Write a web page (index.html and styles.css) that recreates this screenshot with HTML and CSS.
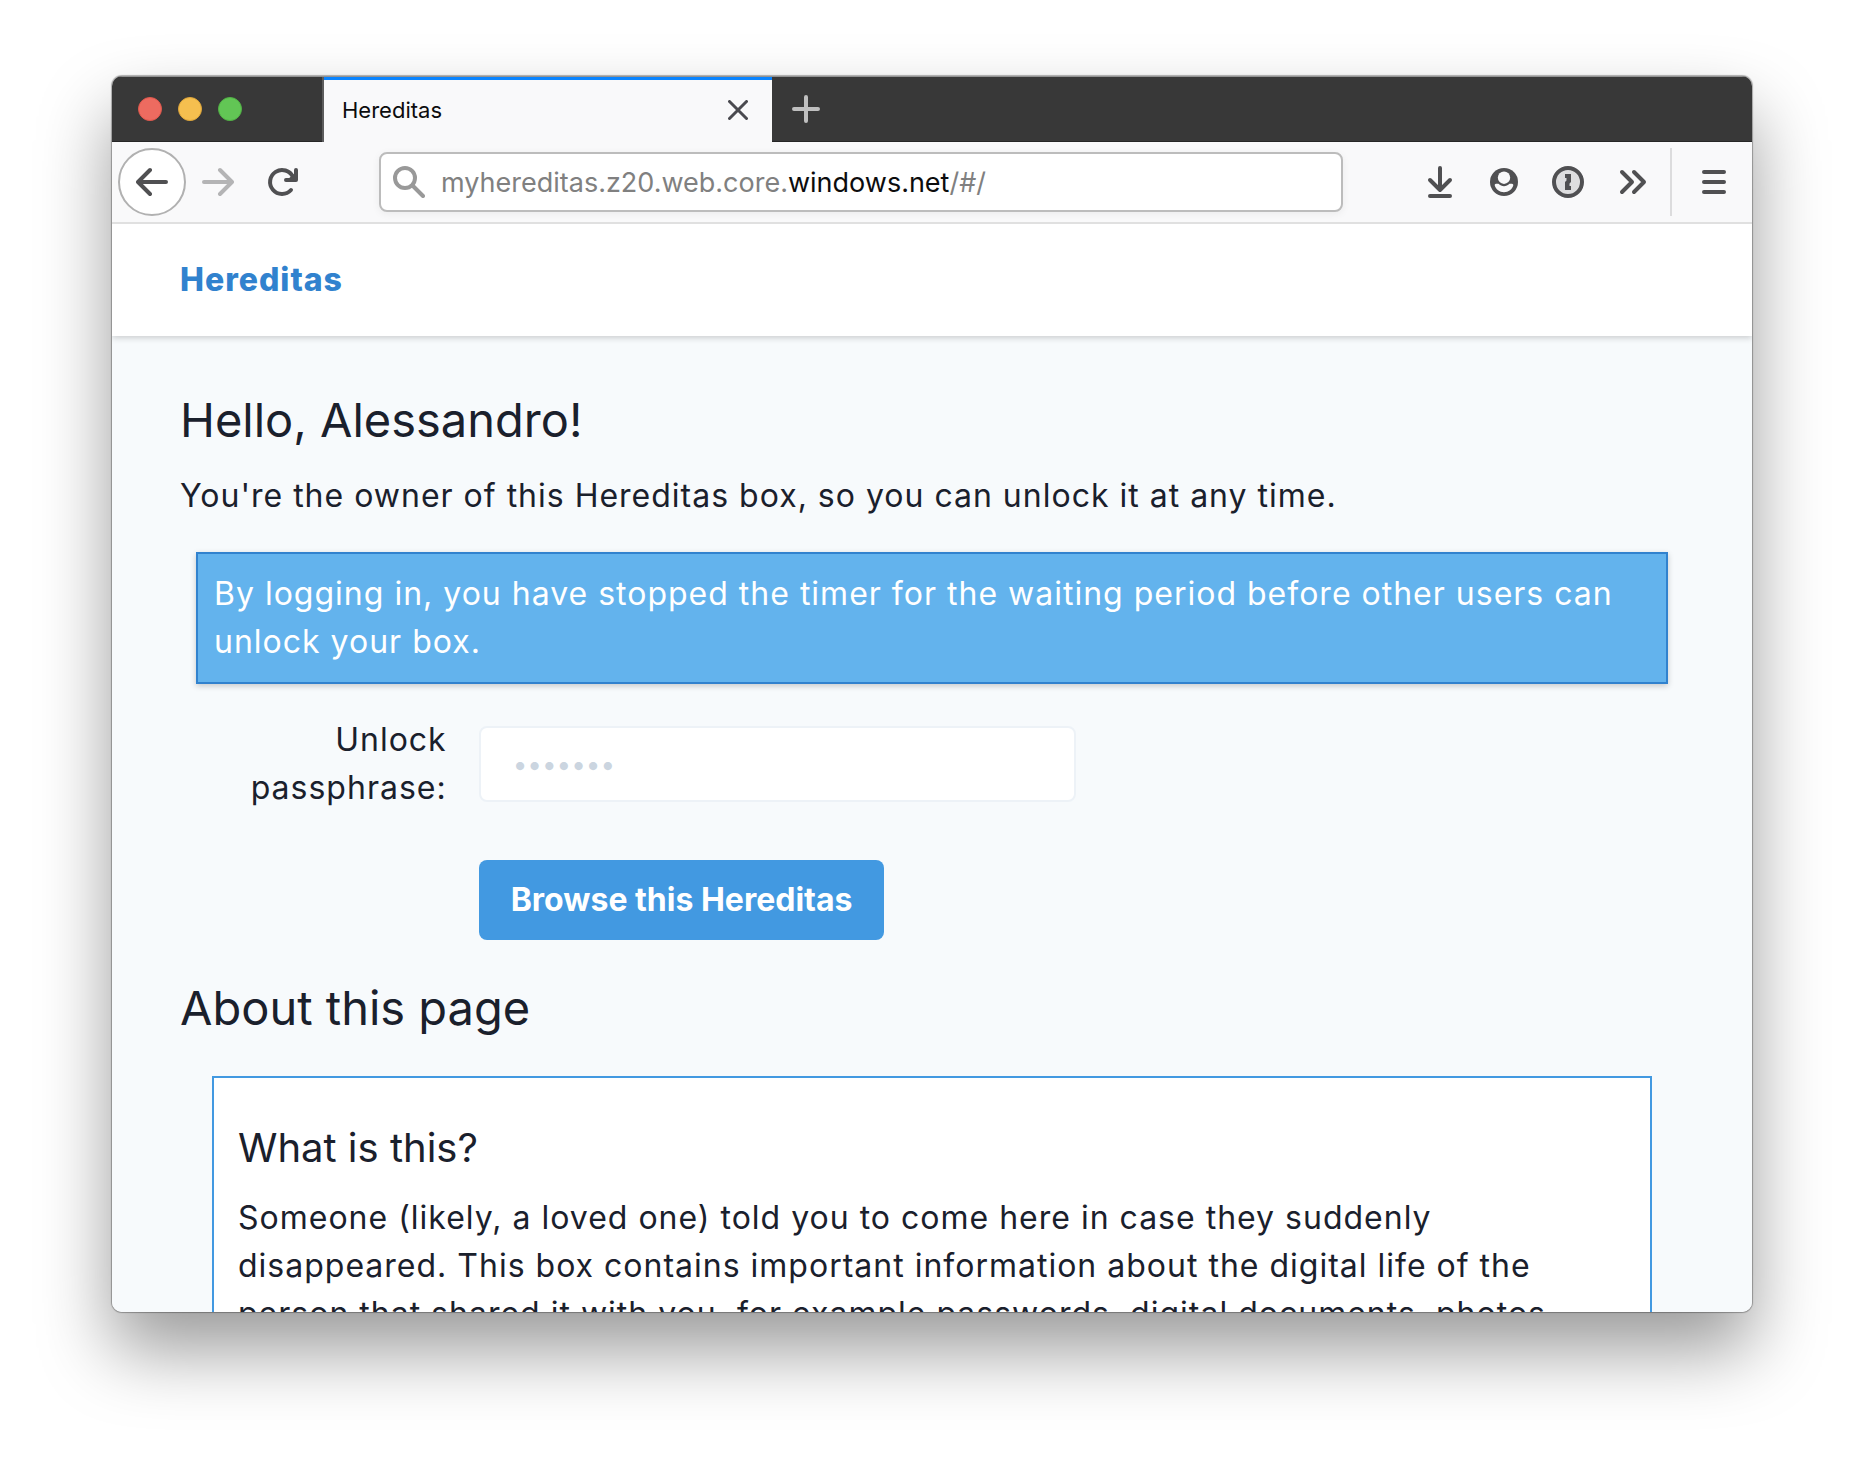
FILE: index.html
```html
<!DOCTYPE html>
<html lang="en">
<head>
<meta charset="utf-8">
<meta name="viewport" content="width=device-width, initial-scale=1">
<title>Hereditas</title>
<link rel="stylesheet" href="styles.css">
</head>
<body>
<div class="window">
  <div class="titlebar">
    <div class="lights">
      <button class="light light-close" aria-label="Close window"></button>
      <button class="light light-minimize" aria-label="Minimize window"></button>
      <button class="light light-zoom" aria-label="Zoom window"></button>
    </div>
    <div class="tab">
      <span class="tab-title">Hereditas</span>
      <button class="tab-close" aria-label="Close tab">
        <svg width="20" height="20" viewBox="0 0 20 20"><path d="M1.500 1.500l17 17M18.500 1.500l-17 17"/></svg>
      </button>
    </div>
    <button class="tab-new" aria-label="New tab">
      <svg width="28" height="28" viewBox="0 0 28 28"><path d="M14 2v24M2 14h24"/></svg>
    </button>
  </div>

  <div class="toolbar">
    <button class="tool tool-back" aria-label="Back">
      <svg width="32" height="32" viewBox="0 0 32 32"><path d="M30 16H3M14 4L2 16l12 12"/></svg>
    </button>
    <button class="tool tool-forward" aria-label="Forward" disabled>
      <svg width="32" height="32" viewBox="0 0 32 32"><path d="M2 16h27M18 4l12 12-12 12"/></svg>
    </button>
    <button class="tool" aria-label="Reload">
      <svg width="32" height="32" viewBox="0 0 32 32"><path d="M25 24A12 12 0 1 1 27 11"/><path d="M30 4v10H20"/><path class="solid" d="M30 6v8h-9z"/></svg>
    </button>
    <div class="address">
      <svg width="32" height="32" viewBox="0 0 32 32"><circle cx="12" cy="12" r="10"/><path d="M19.500 19.500L30 30"/></svg>
      <div class="address-text" role="textbox" aria-label="Address" contenteditable="true" spellcheck="false">myhereditas.z20.web.core.<span class="address-domain">windows.net</span>/#/</div>
    </div>
    <button class="tool" aria-label="Downloads">
      <svg width="32" height="32" viewBox="0 0 32 32"><path d="M16 2v22M6 14l10 10 10-10M6 30h20"/></svg>
    </button>
    <button class="tool" aria-label="Account">
      <svg width="32" height="32" viewBox="0 0 32 32"><circle class="solid" cx="16" cy="16" r="14"/><circle class="hole" cx="16" cy="11.700" r="6.200"/><path class="hole" d="M8 17.800h2.500c1.500 1.700 3.500 2.400 5.500 2.400s4-.7 5.500-2.400H24q1.500 0 1.300 1.500c-1 4-4.800 7-9.300 7s-8.300-3-9.300-7q-.2-1.500 1.300-1.500z"/></svg>
    </button>
    <button class="tool" aria-label="1Password">
      <svg width="32" height="32" viewBox="0 0 32 32"><circle class="disc" cx="16" cy="16" r="14"/><path class="solid" d="M13 8h6v8l-1.500 1.500V20H19v4h-6v-8l1.500-1.500V12H13z"/></svg>
    </button>
    <button class="tool" aria-label="More tools">
      <svg width="32" height="32" viewBox="0 0 32 32"><path d="M6 6l10 10L6 26M18 6l10 10-10 10"/></svg>
    </button>
    <span class="divider"></span>
    <button class="tool" aria-label="Open menu">
      <svg width="32" height="32" viewBox="0 0 32 32"><path d="M6 6h20M6 16h20M6 26h20"/></svg>
    </button>
  </div>

  <div class="page">
    <header class="site-header"><a class="brand" href="#/">Hereditas</a></header>
    <main class="content">
      <h1 class="title">Hello, Alessandro!</h1>
      <p class="lead">You're the owner of this Hereditas box, so you can unlock it at any time.</p>
      <p class="notice" role="status">By logging in, you have stopped the timer for the waiting period before other users can unlock your box.</p>
      <form class="unlock">
        <label class="unlock-label" for="passphrase">Unlock passphrase:</label>
        <input class="unlock-input" id="passphrase" type="password" placeholder="•••••••">
        <button class="unlock-button" type="submit">Browse this Hereditas</button>
      </form>
      <h2 class="title">About this page</h2>
      <section class="card">
        <h3 class="card-title">What is this?</h3>
        <p>Someone (likely, a loved one) told you to come here in case they suddenly disappeared. This box contains important information about the digital life of the person that shared it with you, for example passwords, digital documents, photos</p>
      </section>
    </main>
  </div>
</div>
</body>
</html>
```
FILE: styles.css
```css
* {
  box-sizing: border-box;
}

body {
  display: flex;
  height: 100vh;
  margin: 0;
  padding: 76px 112px 148px;
  background: #fff;
  color: #1a202c;
  font: 32px/48px Inter, "Liberation Sans", sans-serif;
}

h1, h2, h3, p {
  margin: 0;
  font-weight: 400;
}

button {
  padding: 0;
  border: 0;
  background: none;
  font-family: inherit;
}

svg {
  flex: none;
  fill: none;
  stroke: currentColor;
  stroke-width: 4;
  stroke-linecap: round;
  stroke-linejoin: round;
}

.window {
  display: flex;
  flex: 1;
  flex-direction: column;
  min-width: 0;
  overflow: hidden;
  border-radius: 10px;
  box-shadow: 0 0 1px 1px rgba(0, 0, 0, .3), 0 38px 72px rgba(0, 0, 0, .4);
}

/* Tab strip */
.titlebar {
  display: flex;
  flex: none;
  height: 66px;
  border-top: 1px solid #929292;
  background: #383838;
  box-shadow: inset 0 -1px #262626;
}

.lights {
  display: flex;
  align-items: center;
  gap: 16px;
  width: 212px;
  padding: 0 0 2px 26px;
  border-right: 2px solid #5c5c5c;
}

.light {
  width: 24px;
  height: 24px;
  border: 1px solid;
  border-radius: 50%;
}

.light-close {
  border-color: #e0574c;
  background: #ed6b60;
}

.light-minimize {
  border-color: #dfa63a;
  background: #f5bf4f;
}

.light-zoom {
  border-color: #51b245;
  background: #62c655;
}

.tab {
  display: flex;
  align-items: center;
  justify-content: space-between;
  width: 448px;
  padding: 0 24px 2px 18px;
  border-top: 3px solid #0a84ff;
  background: #f9f9fa;
}

.tab-title {
  color: #0c0c0d;
  font-size: 22px;
}

.tab-close {
  display: flex;
  color: #4a4a4f;
}

.tab-close svg {
  stroke-width: 3;
}

.tab-new {
  display: flex;
  align-items: center;
  padding: 0 0 2px 20px;
  color: #bfbfbf;
}

/* Navigation toolbar */
.toolbar {
  display: flex;
  flex: none;
  align-items: center;
  height: 82px;
  padding: 0 6px;
  border-bottom: 2px solid #e0e0e0;
  background: #f9f9fa;
}

.tool {
  display: flex;
  flex: none;
  align-items: center;
  justify-content: center;
  width: 64px;
  height: 64px;
  color: #505052;
}

.tool-back {
  width: 68px;
  height: 68px;
  border: 2px solid #b1b1b1;
  border-radius: 50%;
  background: #fff;
}

.tool-forward {
  color: #b4b4b5;
}

.solid {
  fill: currentColor;
  stroke: none;
}

.hole {
  fill: #f9f9fa;
  stroke: none;
}

.disc {
  fill: #dededf;
}

.address {
  display: flex;
  flex: 1;
  align-items: center;
  gap: 16px;
  height: 60px;
  min-width: 0;
  margin: 0 65px;
  padding: 0 12px;
  border: 2px solid #bcbcbc;
  border-radius: 8px;
  background: #fff;
  box-shadow: 0 2px 8px rgba(0, 0, 0, .06);
  color: #999;
}

.address-text {
  overflow: hidden;
  padding-top: 2px;
  color: #808080;
  font-size: 27px;
  white-space: nowrap;
}

.address-domain {
  color: #0c0c0d;
}

.divider {
  width: 2px;
  height: 68px;
  margin: 0 10px 0 6px;
  background: #dcdcdd;
}

/* Web page */
.page {
  flex: 1;
  min-height: 0;
  overflow: hidden;
  background: #f7fafc;
  letter-spacing: 1px;
}

.site-header {
  position: relative;
  padding: 32px 68px;
  background: #fff;
  box-shadow: 0 2px 6px rgba(0, 0, 0, .18);
}

.brand {
  display: block;
  color: #3182ce;
  font-weight: 800;
  text-decoration: none;
}

.content {
  padding: 48px 68px;
}

.title {
  font-size: 47px;
  letter-spacing: normal;
  line-height: 72px;
}

.lead {
  margin-top: 16px;
}

.notice {
  margin: 32px 16px;
  padding: 16px;
  border: 2px solid #3182ce;
  background: #63b3ed;
  box-shadow: 0 2px 6px rgba(0, 0, 0, .2);
  color: #fff;
}

.unlock {
  display: grid;
  grid-template-columns: 1fr 2fr;
  align-items: center;
  row-gap: 48px;
  max-width: 896px;
  margin-bottom: 32px;
}

.unlock-label {
  padding-right: 32px;
  text-align: right;
}

.unlock-input {
  width: 100%;
  height: 76px;
  padding: 0 32px;
  border: 2px solid #edf2f7;
  border-radius: 8px;
  background: #fff;
  color: #4a5568;
  font: inherit;
  font-size: 26px;
}

.unlock-input::placeholder {
  color: #cbd5e0;
  opacity: 1;
}

.unlock-button {
  grid-column: 2;
  justify-self: start;
  padding: 16px 32px;
  border-radius: 8px;
  background: #4299e1;
  color: #fff;
  font-size: 32px;
  font-weight: 700;
  line-height: 48px;
}

.card {
  margin: 32px;
  padding: 40px 24px;
  border: 2px solid #4299e1;
  background: #fff;
}

.card-title {
  margin-bottom: 16px;
  font-size: 40px;
  letter-spacing: normal;
  line-height: 60px;
}
```
